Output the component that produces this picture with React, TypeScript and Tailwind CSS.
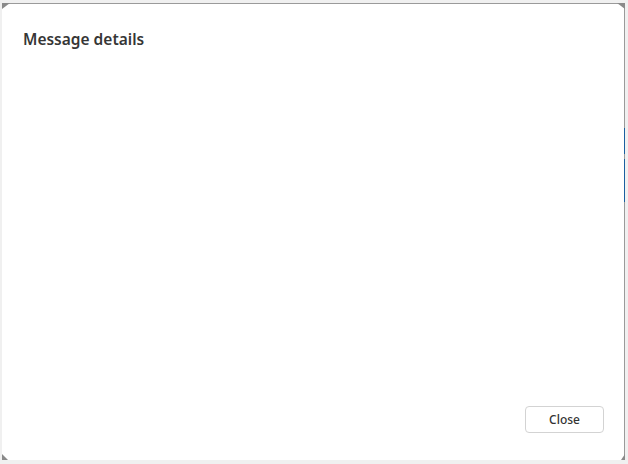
export default function App() {
  return (
    <div className="w-[628px] h-[464px] bg-[#f0f0f0] pt-[3px] pl-[2px] overflow-hidden" style={{ fontFamily: '"Noto Sans", "Open Sans", sans-serif' }}>
      <div className="relative w-[623px] h-[457px] bg-white border-t border-r border-[#9a9a9a] flex flex-col">
        {/* window corner artifacts */}
        <svg className="absolute -top-px left-0" width="8" height="6" viewBox="0 0 8 6">
          <path d="M0 0H8L0 6Z" fill="#8a8a8a" />
        </svg>
        <svg className="absolute -top-px -right-px" width="8" height="6" viewBox="0 0 8 6">
          <path d="M0 0H8V6Z" fill="#8a8a8a" />
        </svg>
        <svg className="absolute bottom-0 left-0" width="6" height="6" viewBox="0 0 6 6">
          <path d="M0 0V6H6Z" fill="#8a8a8a" />
        </svg>
        <svg className="absolute bottom-0 -right-px" width="4" height="6" viewBox="0 0 4 6">
          <path d="M4 0V6H0Z" fill="#8a8a8a" />
        </svg>
        {/* focus accents on right edge */}
        <div className="absolute -right-px top-[124px] w-px h-[26px] bg-[#1a5fa0]" />
        <div className="absolute -right-px top-[155px] w-px h-[43px] bg-[#1a5fa0]" />

        <div className="pt-[25px] pl-[21px] text-[15.5px] font-semibold text-[#363636] leading-5">
          Message details
        </div>
        <div className="flex-1" />
        <div className="flex justify-end pr-[20px] pb-[27px]">
          <button className="w-[79px] h-[27px] rounded-[4px] border border-[#d3d3d3] bg-white text-[12px] font-medium text-[#333] leading-none">
            Close
          </button>
        </div>
      </div>
    </div>
  )
}
